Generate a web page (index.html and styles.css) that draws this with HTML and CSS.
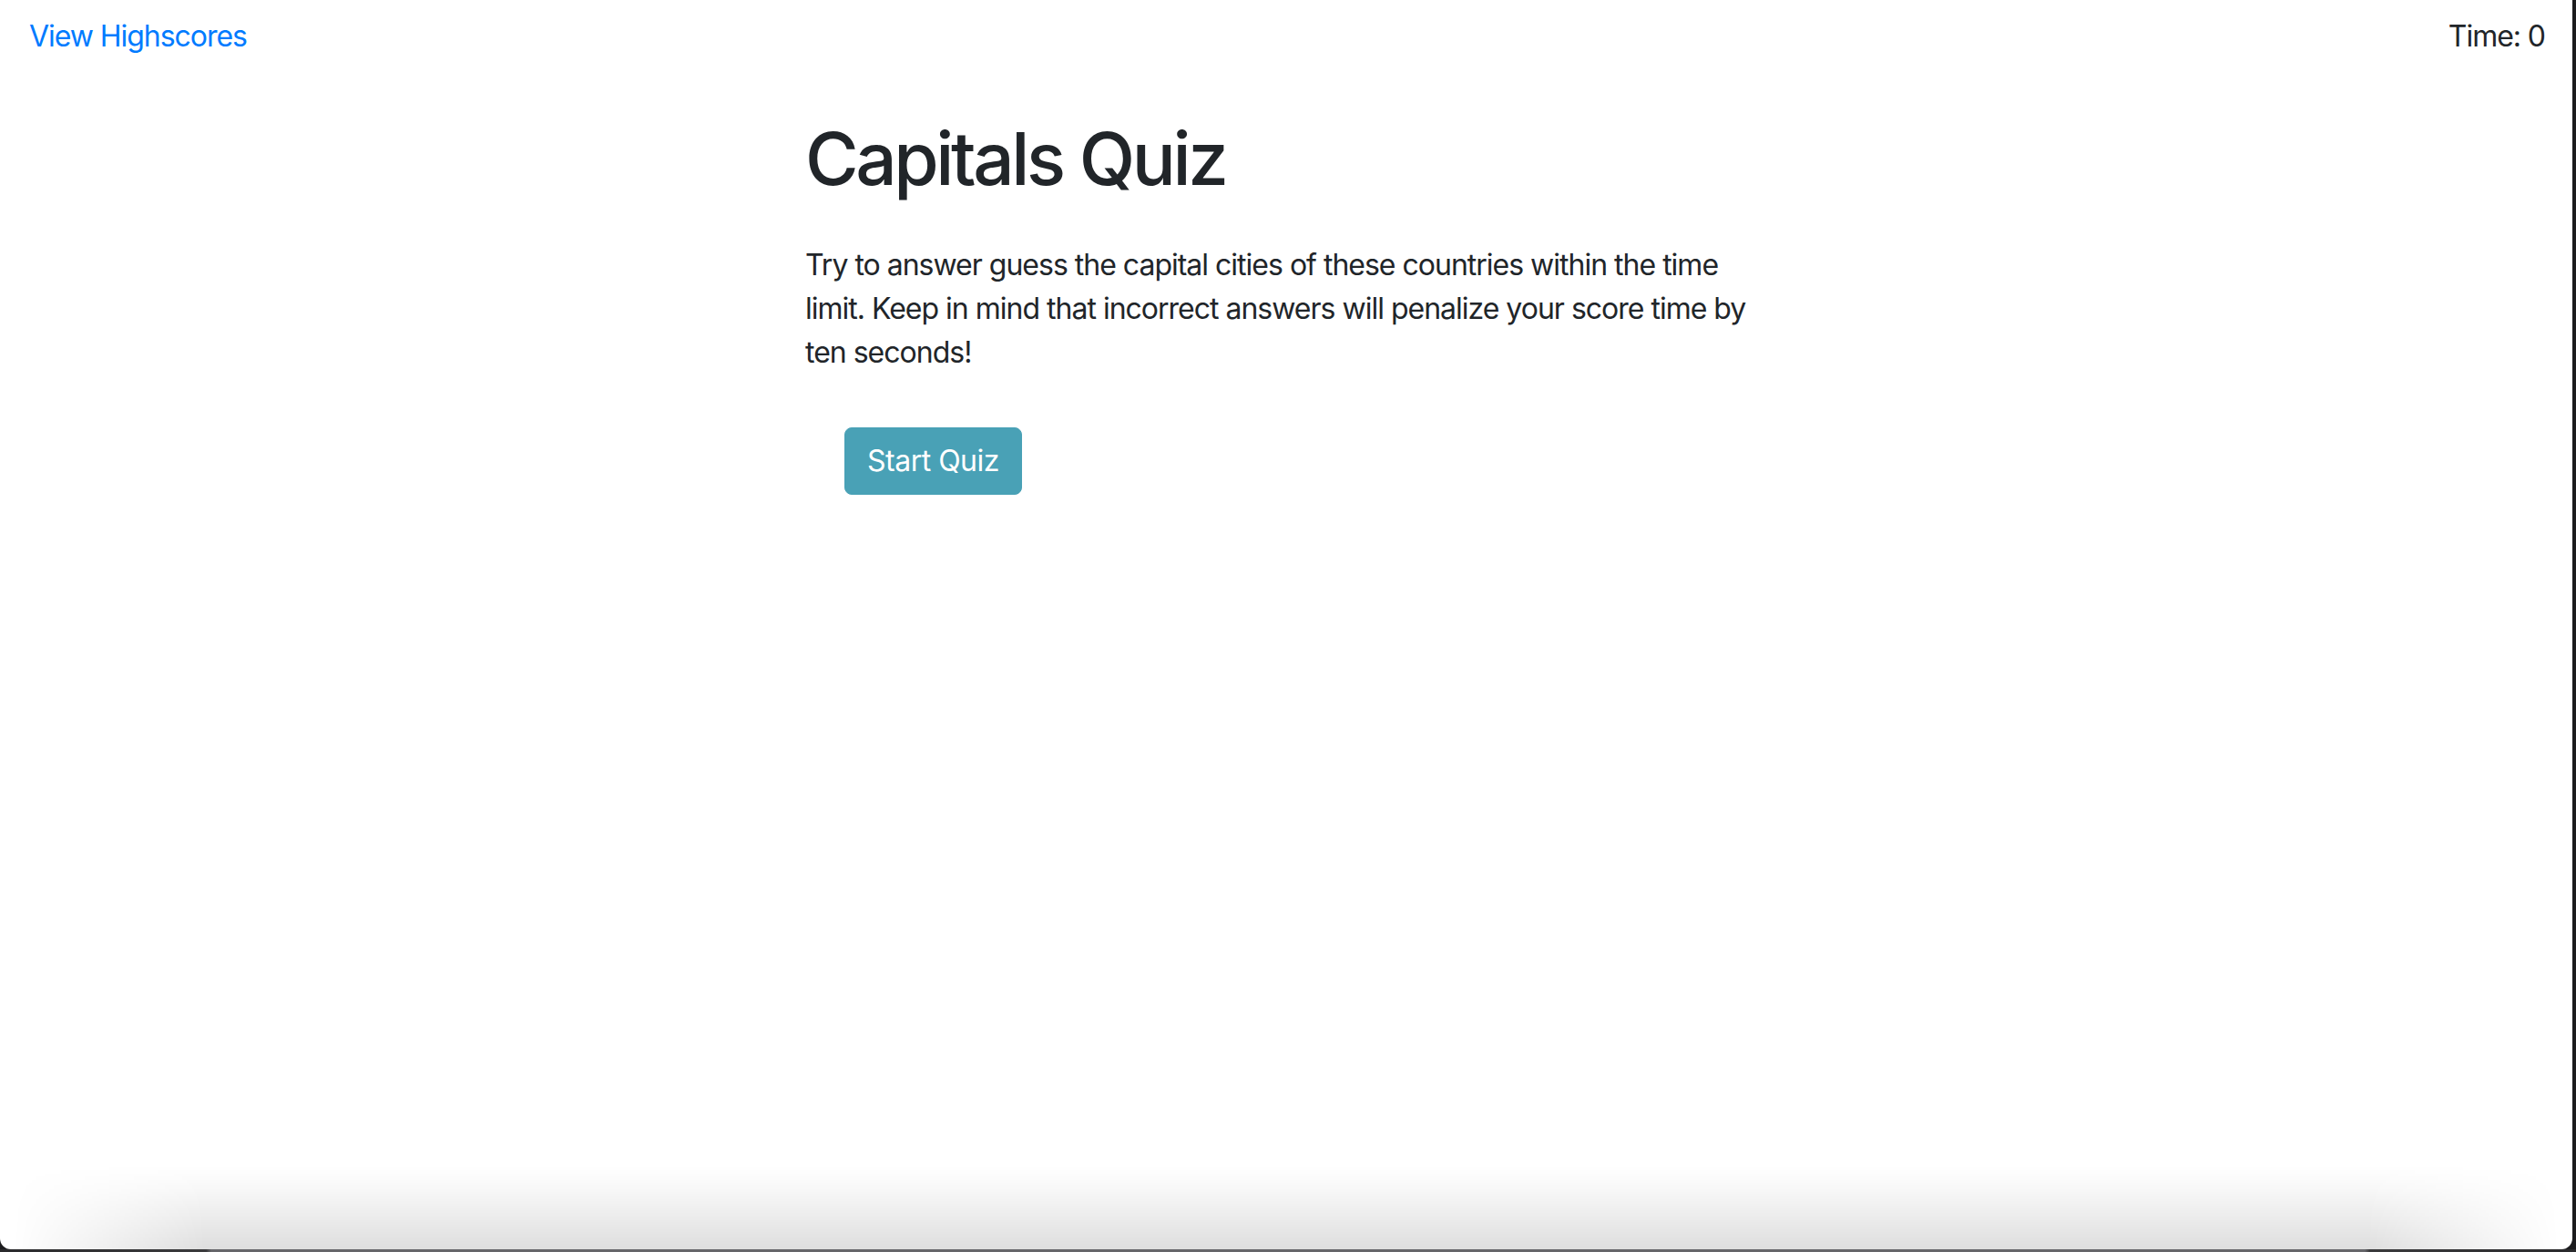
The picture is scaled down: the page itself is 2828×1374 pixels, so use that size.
FILE: index.html
```html
<!DOCTYPE html>
<html lang="en">
<head>
<meta charset="utf-8">
<title>Capitals Quiz</title>
<link rel="stylesheet" href="styles.css">
</head>
<body>
<div class="window">
  <header class="topbar">
    <a class="highscores" href="#">View Highscores</a>
    <div class="timer">Time: 0</div>
  </header>
  <main class="content">
    <h1 class="title">Capitals Quiz</h1>
    <p class="intro">Try to answer guess the capital cities of these countries within the time limit. Keep in mind that incorrect answers will penalize your score time by ten seconds!</p>
    <div class="actions">
      <button class="start-btn" type="button">Start Quiz</button>
    </div>
  </main>
  <div class="shade"></div>
</div>
<div class="edge"></div>
</body>
</html>
```
FILE: styles.css
```css
html, body {
  margin: 0;
  padding: 0;
  height: 100%;
  overflow: hidden;
}
body {
  background: #1c1c1e;
  font-family: Inter, "Noto Sans", "Liberation Sans", sans-serif;
  color: #212529;
  display: flex;
  flex-direction: column;
}
.window {
  position: relative;
  width: 2824px;
  height: 1371px;
  background: #ffffff;
  border-radius: 0 0 12px 12px;
  overflow: hidden;
  display: flex;
  flex-direction: column;
}
.topbar {
  display: flex;
  justify-content: space-between;
  align-items: flex-start;
  padding: 16px 30px 0 32px;
  font-size: 32px;
  line-height: 48px;
  letter-spacing: -1.05px;
}
.highscores {
  color: #007bff;
  text-decoration: none;
}
.timer {
  color: #212529;
}
.content {
  width: 1068px;
  margin-left: 884px;
  display: flex;
  flex-direction: column;
}
.title {
  margin: 62px 0 0 0;
  font-size: 80px;
  line-height: 96px;
  font-weight: 500;
  letter-spacing: -3.4px;
  color: #212529;
}
.intro {
  margin: 45px 0 0 0;
  font-size: 32px;
  line-height: 48px;
  font-weight: 400;
  letter-spacing: -1px;
}
.actions {
  display: flex;
  margin-top: 58px;
  padding-left: 43px;
}
.start-btn {
  font-family: inherit;
  font-size: 32px;
  line-height: 48px;
  letter-spacing: -0.5px;
  padding: 12px 24px;
  border: 1px solid #49a1b6;
  border-radius: 8px;
  background: #49a1b6;
  color: #ffffff;
  cursor: pointer;
}
.shade {
  position: absolute;
  left: 0;
  right: 0;
  bottom: 0;
  height: 92px;
  background: linear-gradient(to bottom, rgba(0,0,0,0) 0%, rgba(0,0,0,0.03) 30%, rgba(0,0,0,0.13) 100%);
  -webkit-mask-image: linear-gradient(to right, transparent 0.5%, #000 8%, #000 92%, transparent 99.5%);
  mask-image: linear-gradient(to right, transparent 0.5%, #000 8%, #000 92%, transparent 99.5%);
  pointer-events: none;
}
.edge {
  flex: 1;
  background: linear-gradient(to right, #2a2a2c 0%, #3a3a3c 8%, #66666a 8.2%, #66666a 91.8%, #3a3a3c 92%, #2a2a2c 100%);
}
```
